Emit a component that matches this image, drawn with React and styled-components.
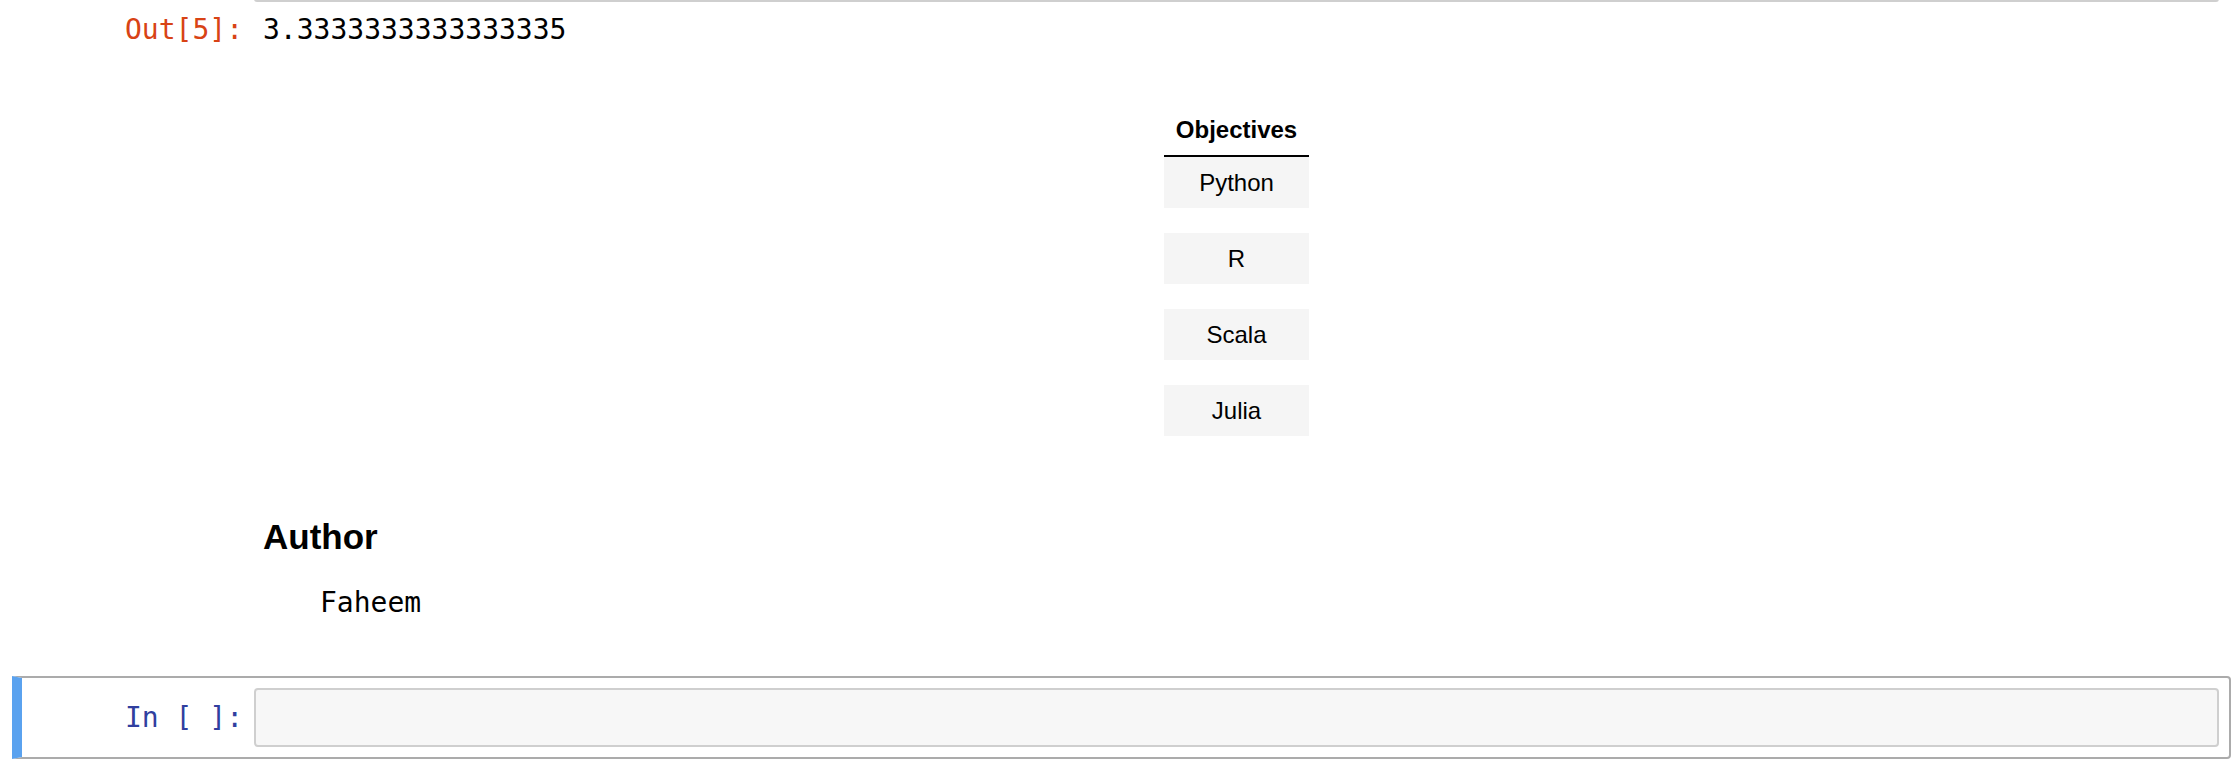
import { Fragment } from 'react';
import styled, { createGlobalStyle } from 'styled-components';

const GlobalStyle = createGlobalStyle`
  html, body {
    margin: 0;
    padding: 0;
    background: #fff;
  }
  body {
    font-family: "Liberation Sans", Arial, sans-serif;
    color: #000;
    overflow: hidden;
  }
`;

const Notebook = styled.div`
  padding: 0 7px 0 12px;
`;

const Cell = styled.div`
  display: grid;
  grid-template-columns: 232px 1fr;
  padding: ${(p) => (p.$cut ? '0 10px 10px 0' : '10px 10px 10px 0')};
  border: 2px solid ${(p) => (p.$selected ? '#ababab' : 'transparent')};
  border-top-width: ${(p) => (p.$cut ? '0' : '2px')};
  border-left: 10px solid ${(p) => (p.$selected ? '#5aa2ef' : 'transparent')};
  border-radius: ${(p) => (p.$selected ? '0 4px 4px 0' : '4px')};
`;

const Prompt = styled.div`
  font-family: "DejaVu Sans Mono", monospace;
  font-size: 28px;
  line-height: 34px;
  text-align: right;
  padding: ${(p) => p.$top || 0}px 11px 0 0;
  color: ${(p) => (p.$out ? '#d84315' : '#303f9f')};
  white-space: pre;
`;

const InputBox = styled.div`
  box-sizing: border-box;
  background: #f7f7f7;
  border: 2px solid #cfcfcf;
  border-radius: 4px;
  height: 59px;
`;

const InputEdge = styled(InputBox)`
  height: 3px;
  border-top: none;
  border-radius: 0 0 5px 5px;
  background: transparent;
  margin-top: -1px;
`;

const OutputText = styled.div`
  font-family: "DejaVu Sans Mono", monospace;
  font-size: 28px;
  line-height: 34px;
  padding-left: 9px;
  margin-top: 11px;
`;

const Rendered = styled.div`
  grid-column: 2;
  padding: 0 9px;
`;

const Table = styled.table`
  border-collapse: collapse;
  margin: 33px auto 0;
  font-size: 24px;
  line-height: 27px;
  th, td {
    padding: 12px;
    text-align: center;
  }
  th {
    font-weight: bold;
    border-bottom: 2px solid #000;
  }
  tbody tr:nth-child(odd) {
    background: #f5f5f5;
  }
  tbody tr.blank td {
    padding: 12px 12px 13px;
  }
`;

const Heading = styled.h2`
  font-size: 35px;
  line-height: 40px;
  font-weight: bold;
  margin: 57px 0 0;
`;

const Code = styled.pre`
  font-family: "DejaVu Sans Mono", monospace;
  font-size: 28px;
  line-height: 34px;
  margin: 29px 0 44px 57px;
`;

const languages = ['Python', 'R', 'Scala', 'Julia'];

export default function App() {
  return (
    <Notebook>
      <GlobalStyle />
      <Cell $cut>
        <div />
        <InputEdge />
        <Prompt $out $top={11}>Out[5]:</Prompt>
        <OutputText>3.3333333333333335</OutputText>
      </Cell>

      <Cell>
        <Rendered>
          <Table>
            <thead>
              <tr>
                <th>Objectives</th>
              </tr>
            </thead>
            <tbody>
              {languages.map((lang, i) => (
                <Fragment key={lang}>
                  {i > 0 && (
                    <tr className="blank">
                      <td />
                    </tr>
                  )}
                  <tr>
                    <td>{lang}</td>
                  </tr>
                </Fragment>
              ))}
            </tbody>
          </Table>
        </Rendered>
      </Cell>

      <Cell>
        <Rendered>
          <Heading>Author</Heading>
          <Code>Faheem</Code>
        </Rendered>
      </Cell>

      <Cell $selected>
        <Prompt $top={13}>In [ ]:</Prompt>
        <InputBox />
      </Cell>
    </Notebook>
  );
}
